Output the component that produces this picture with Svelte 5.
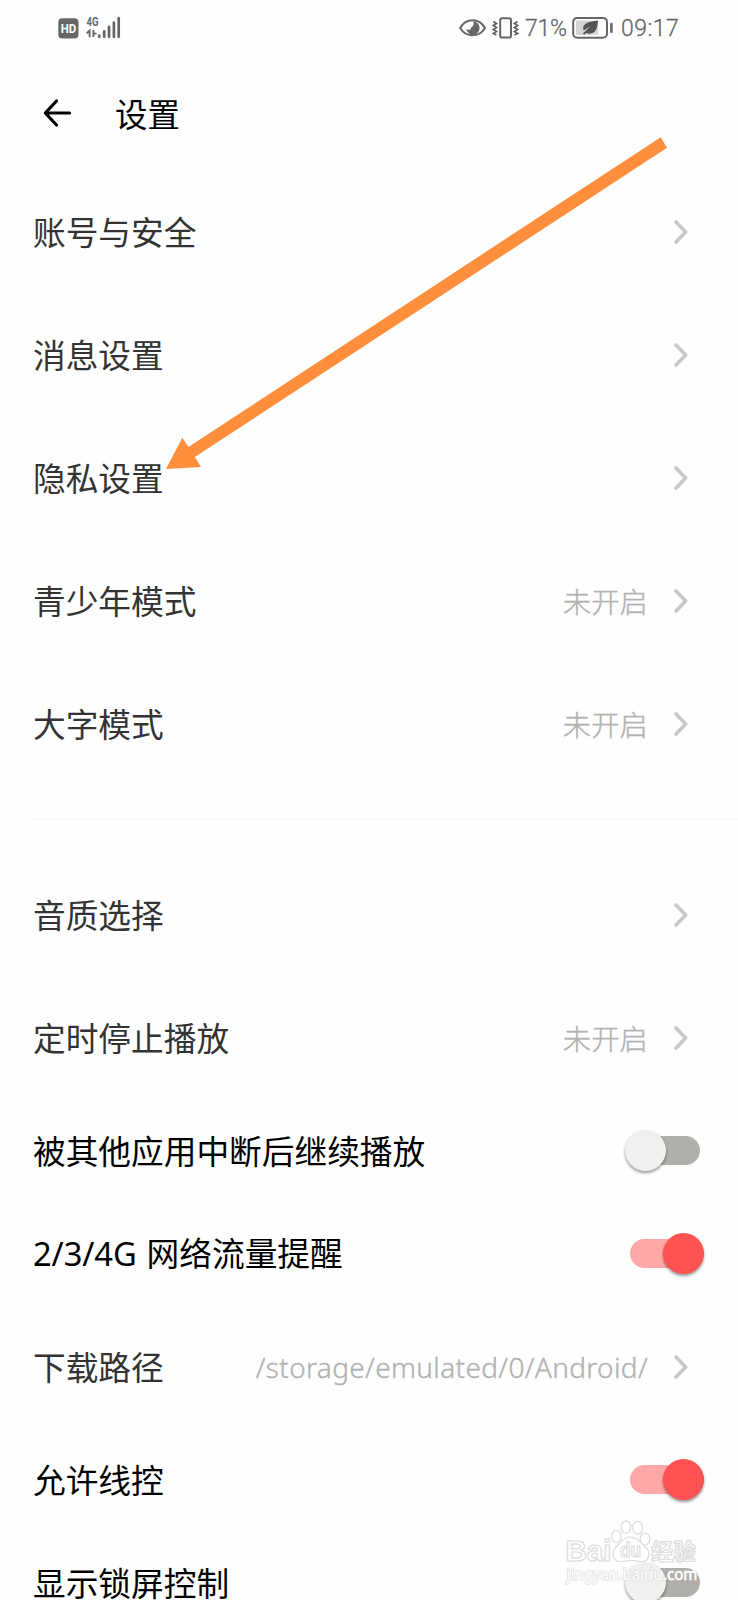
<script>
	const main_items = [
		{ label: '账号与安全' },
		{ label: '消息设置' },
		{ label: '隐私设置' },
		{ label: '青少年模式', value: '未开启' },
		{ label: '大字模式', value: '未开启' }
	];

	let play_items = $state([
		{ label: '音质选择' },
		{ label: '定时停止播放', value: '未开启' },
		{ label: '被其他应用中断后继续播放', toggle: true, on: false },
		{ prefix: '2/3/4G', label: '网络流量提醒', toggle: true, on: true },
		{ label: '下载路径', value: '/storage/emulated/0/Android/', latin: true },
		{ label: '允许线控', toggle: true, on: true },
		{ label: '显示锁屏控制', toggle: true, on: false }
	]);
</script>

{#snippet linkRow(item)}
	<div class="row">
		<span class="label">{item.label}</span>
		{#if item.value}
			<span class="value" class:latin={item.latin}>{item.value}</span>
		{/if}
		<svg class="chevron" width="18" height="28" viewBox="0 0 18 28">
			<path d="M4 4 L13.7 14 L4 24" />
		</svg>
	</div>
{/snippet}

<div class="screen">
	<div class="status">
		<svg class="hd" width="21" height="21" viewBox="0 0 21 21">
			<rect x="0.3" y="0.3" width="20.2" height="20.2" rx="4" fill="#666" />
			<text x="10.4" y="14.9" text-anchor="middle" textLength="15.5" lengthAdjust="spacingAndGlyphs">HD</text>
		</svg>
		<svg class="signal" width="36" height="30" viewBox="0 -3 36 30">
			<text x="0.5" y="9.9" textLength="12" lengthAdjust="spacingAndGlyphs">4G</text>
			<path d="M0.6 17.2 L3.6 14.6 V21.2 M7.4 14 V21 M7.4 17.6 H10.6" fill="none" stroke="#666" stroke-width="1.9" />
			<path d="M13.3 19.6v1.2M18.2 15.3v5.5M23 10.8v10M27.9 6.5v14.3M32.7 2.2v18.6" stroke="#666" stroke-width="2.7" stroke-linecap="round" />
		</svg>
		<span class="spacer"></span>
		<svg class="eye" width="28" height="20" viewBox="0 0 28 20">
			<path d="M1.2 10 C7 -.2 20 -.2 26 10 C20 19.8 7 19.8 1.2 10Z" fill="none" stroke="#666" stroke-width="2" stroke-linejoin="round" />
			<path d="M14 3.4 A6.7 6.7 0 1 1 7.3 11 C8.6 12.4 12.4 12.2 12.3 9 C14.6 8.4 15.2 5.5 14 3.4Z" fill="#666" />
		</svg>
		<svg class="vibrate" width="28" height="24" viewBox="0 0 28 24" fill="none" stroke="#666">
			<rect x="8.2" y="2.2" width="10.8" height="19.4" rx="2.2" stroke-width="2" />
			<path d="M1.4 5.5l3 2-3 2 3 2-3 2 3 2-3 2 3 1.5M25.5 5.5l-3 2 3 2-3 2 3 2-3 2 3 2-3 1.5" stroke-width="1.9" />
		</svg>
		<span class="percent">71%</span>
		<svg class="battery" width="42" height="24" viewBox="0 0 42 24">
			<rect x="1.2" y="1.9" width="33.8" height="19.8" rx="4" fill="none" stroke="#666" stroke-width="2" />
			<rect x="4" y="4.6" width="22" height="14.4" rx="1" fill="#d5d5d5" />
			<path d="M26 4.6 C17 5.5 9 8 11.6 14.6 L18.5 10.2 L10.8 17.6 L12.3 18.8 L14 17.1 C22 19.5 25.5 14.5 26 4.6Z" fill="#555" />
			<path d="M39.4 8v7.8" stroke="#666" stroke-width="2.6" stroke-linecap="round" />
		</svg>
		<span class="time">09:17</span>
	</div>

	<header>
		<svg class="back" width="30" height="30" viewBox="0 0 30 30">
			<path d="M14.5 3 L3.3 15 L14.5 27 M3.5 15 H27.5" />
		</svg>
		<h1>设置</h1>
	</header>

	{#each main_items as item}
		{@render linkRow(item)}
	{/each}

	<div class="divider"></div>

	{#each play_items as item}
		{#if item.toggle}
			<div class="row toggle-row">
				<span class="label">
					{#if item.prefix}<span class="prefix">{item.prefix}</span>{/if}{item.label}
				</span>
				<button class="switch" class:on={item.on} aria-label={item.label} onclick={() => (item.on = !item.on)}>
					<span class="knob"></span>
				</button>
			</div>
		{:else}
			{@render linkRow(item)}
		{/if}
	{/each}

	<!-- pointer to the privacy row -->
	<svg class="pointer" width="738" height="500" viewBox="0 0 738 500">
		<path d="M660.7 137.2 L667 147.8 L194.8 457 L201 467 L166 469 L182.3 437.7 L188.4 447Z" fill="#ff8f3c" />
	</svg>

	<svg class="watermark" width="140" height="76" viewBox="0 0 140 76">
		<g fill="#fff" fill-opacity="0.7" stroke="#dcdcdc" stroke-width="1.2">
			<text class="wm-logo" x="0.5" y="41" textLength="46" lengthAdjust="spacingAndGlyphs">Bai</text>
			<ellipse cx="51.5" cy="16.5" rx="4.8" ry="6" />
			<ellipse cx="61" cy="7" rx="4.8" ry="6.2" />
			<ellipse cx="72.7" cy="7.8" rx="4.9" ry="6.4" />
			<ellipse cx="80" cy="19" rx="4.8" ry="6" />
			<path d="M65 17 C59 17 57 22 52 26 C46 31 47 41.5 55 41.5 C60 41.5 62 40.5 66 40.5 C70 40.5 72 41.5 77 41.5 C85 41.5 86 31 79.5 26 C75 22 72 17 65 17Z" />
			<text class="wm-du" x="55" y="37" textLength="21" lengthAdjust="spacingAndGlyphs">du</text>
			<text class="wm-cn" x="86" y="39.5" textLength="45" lengthAdjust="spacingAndGlyphs">经验</text>
		</g>
		<text class="wm-url" x="1.5" y="59.5" textLength="131" lengthAdjust="spacingAndGlyphs">jingyan.baidu.com</text>
	</svg>
</div>

<style>
	:global(body) {
		margin: 0;
		background: #fefefe;
		overflow: hidden;
	}

	.screen {
		position: relative;
		width: 738px;
		height: 1600px;
		overflow: hidden;
		background: #fefefe;
		color: #333;
		font-family: 'Noto Sans CJK SC', sans-serif;
	}

	.status {
		display: flex;
		align-items: center;
		height: 56px;
		box-sizing: border-box;
		padding: 0 58px 0 58px;
		color: #666;
		font-family: Roboto, sans-serif;
		font-size: 23px;
		line-height: 28px;
	}

	.status svg {
		flex: none;
	}

	.hd text {
		fill: #fff;
		font: bold 12px Roboto, sans-serif;
	}

	.signal {
		margin-left: 7px;
	}

	.signal text {
		fill: #666;
		font: bold 12px Roboto, sans-serif;
	}

	.spacer {
		flex: 1;
	}

	.vibrate {
		margin-left: 5px;
	}

	.percent,
	.time {
		padding-top: 2px;
		font-weight: 300;
		-webkit-text-stroke: 0.3px #666;
	}

	.percent {
		width: 43px;
		margin-left: 5px;
		letter-spacing: -0.2px;
	}

	.battery {
		margin-left: 4px;
	}

	.time {
		width: 59px;
		margin-left: 7px;
		letter-spacing: 0.5px;
	}

	header {
		display: flex;
		align-items: center;
		height: 114px;
		padding-left: 42px;
	}

	.back {
		fill: none;
		stroke: #000;
		stroke-width: 3.2;
		stroke-linecap: round;
		stroke-linejoin: round;
	}

	h1 {
		margin: -1px 0 0 43px;
		color: #000;
		font-size: 32.4px;
		font-weight: 400;
		line-height: 48px;
	}

	.row {
		display: flex;
		align-items: center;
		height: 123px;
		box-sizing: border-box;
		padding: 0 48px 0 33px;
	}

	.label {
		flex: 1;
		padding-bottom: 2px;
		font-size: 32.7px;
		line-height: 48px;
		white-space: nowrap;
	}

	.value {
		color: #b2b2b2;
		font-size: 28.4px;
		font-weight: 300;
		line-height: 42px;
		-webkit-text-stroke: 0.35px #b2b2b2;
	}

	.latin {
		font-family: 'Noto Sans', sans-serif;
		font-size: 28px;
		letter-spacing: 0.34px;
	}

	.chevron {
		margin-left: 24px;
		fill: none;
		stroke: #c8c8c8;
		stroke-width: 3.6;
		stroke-linecap: round;
		stroke-linejoin: round;
	}

	.divider {
		height: 2px;
		margin: 33px 0 33px 33px;
		background: #f9f9f9;
	}

	.toggle-row {
		height: 103px;
		padding-right: 34px;
		color: #000;
	}

	.prefix {
		margin-right: 10px;
		font-family: 'Noto Sans', sans-serif;
		letter-spacing: -0.1px;
	}

	.switch {
		display: flex;
		align-items: center;
		width: 75px;
		height: 29px;
		margin: 0 4px 0 0;
		padding: 0;
		border: 0;
		border-radius: 15px;
		background: linear-gradient(to right, transparent 15px, #b0afab 15px);
	}

	.switch.on {
		justify-content: flex-end;
		width: 74px;
		margin: 0;
		background: #ffa8a8;
	}

	.knob {
		width: 41px;
		height: 41px;
		border-radius: 50%;
		background: #f0f0f0;
		box-shadow: 0 2px 3px rgba(0, 0, 0, 0.4);
	}

	.on .knob {
		background: #ff5252;
	}

	.pointer {
		position: absolute;
		top: 0;
		left: 0;
		pointer-events: none;
	}

	.watermark {
		position: absolute;
		top: 1520px;
		left: 565px;
		overflow: visible;
		pointer-events: none;
	}

	.wm-logo {
		font: bold 30px 'Liberation Sans', sans-serif;
	}

	.wm-du {
		font: bold 20px 'Liberation Sans', sans-serif;
	}

	.wm-cn {
		font: bold 23px 'Noto Sans CJK SC', sans-serif;
	}

	.wm-url {
		fill: #fff;
		stroke: #dadada;
		stroke-width: 1.2;
		paint-order: stroke;
		font: 16px 'Noto Sans', sans-serif;
	}
</style>
